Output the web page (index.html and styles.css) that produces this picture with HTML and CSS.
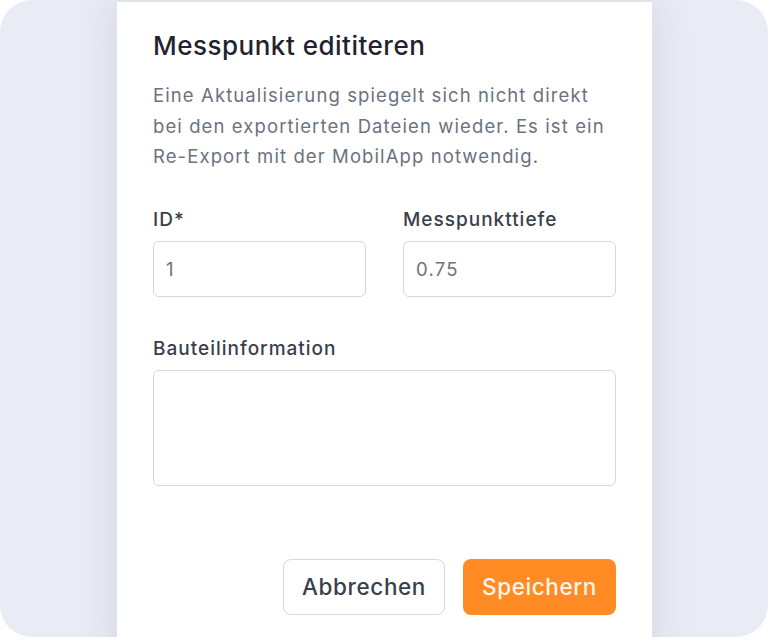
FILE: index.html
```html
<!DOCTYPE html>
<html lang="de">
  <head>
    <meta charset="UTF-8" />
    <meta name="viewport" content="width=device-width, initial-scale=1.0" />
    <title>Messpunkt editieren</title>
    <link rel="stylesheet" href="styles.css">
  </head>
  <body>
    <div class="frame">
      <div class="dialog">
        <h2 class="dialog-title">Messpunkt edititeren</h2>
        <p class="dialog-text">
          Eine Aktualisierung spiegelt sich nicht direkt bei den exportierten
          Dateien wieder. Es ist ein Re-Export mit der MobilApp notwendig.
        </p>

        <div class="field-row">
          <div class="field">
            <label for="pointId">ID*</label>
            <input id="pointId" type="text" value="1" />
          </div>
          <div class="field">
            <label for="pointDepth">Messpunkttiefe</label>
            <input id="pointDepth" type="text" value="0.75" />
          </div>
        </div>

        <div class="field">
          <label for="partInfo">Bauteilinformation</label>
          <textarea id="partInfo"></textarea>
        </div>

        <div class="actions">
          <button class="btn btn-secondary">Abbrechen</button>
          <button class="btn btn-primary">Speichern</button>
        </div>
      </div>
    </div>
  </body>
</html>
```

FILE: styles.css
```css
/* General Styles */
body {
  margin: 0;
  background: #ffffff;
  font-family: Inter, "Noto Sans", sans-serif;
}

.frame {
  width: 768px;
  height: 637px;
  border-radius: 32px;
  background: #e9ecf4;
  overflow: hidden;
}

/* Dialog */
.dialog {
  box-sizing: border-box;
  width: 535px;
  height: 660px;
  margin: 2px 0 0 117px;
  padding: 29px 36px 0 36px;
  background: #ffffff;
  box-shadow: 0 0 40px rgba(30, 40, 60, 0.12);
  display: flex;
  flex-direction: column;
}

.dialog-title {
  margin: 0;
  font-size: 26px;
  font-weight: 500;
  line-height: 30px;
  letter-spacing: 0.5px;
  color: #1f2430;
}

.dialog-text {
  margin: 19px 0 0 0;
  font-size: 18.5px;
  line-height: 30.5px;
  letter-spacing: 1.1px;
  color: #6b7280;
}

/* Form fields */
.field-row {
  display: flex;
  gap: 37px;
  margin-top: 36px;
}

.field {
  display: flex;
  flex-direction: column;
}

.field-row .field {
  flex: 1;
}

.field-row + .field {
  margin-top: 40px;
}

label {
  font-size: 19px;
  font-weight: 500;
  line-height: 24px;
  letter-spacing: 1px;
  color: #3a3f4b;
  margin-bottom: 9px;
}

input,
textarea {
  box-sizing: border-box;
  width: 100%;
  border: 1px solid #d5d8de;
  border-radius: 6px;
  font-family: inherit;
  font-size: 18.5px;
  letter-spacing: 1.2px;
  color: #6b7280;
  background: #ffffff;
}

input {
  height: 56px;
  padding: 0 12px;
}

textarea {
  height: 116px;
  resize: none;
}

/* Buttons */
.actions {
  display: flex;
  justify-content: flex-end;
  gap: 18px;
  margin-top: 73px;
}

.btn {
  height: 56px;
  border-radius: 8px;
  font-family: inherit;
  font-size: 22.5px;
  font-weight: 500;
  letter-spacing: 0.6px;
  cursor: pointer;
}

.btn-secondary {
  width: 162px;
  background: #ffffff;
  border: 1px solid #d5d8de;
  color: #3a3f4b;
}

.btn-primary {
  width: 153px;
  background: #ff8b24;
  border: none;
  color: #fff5ea;
}
```
